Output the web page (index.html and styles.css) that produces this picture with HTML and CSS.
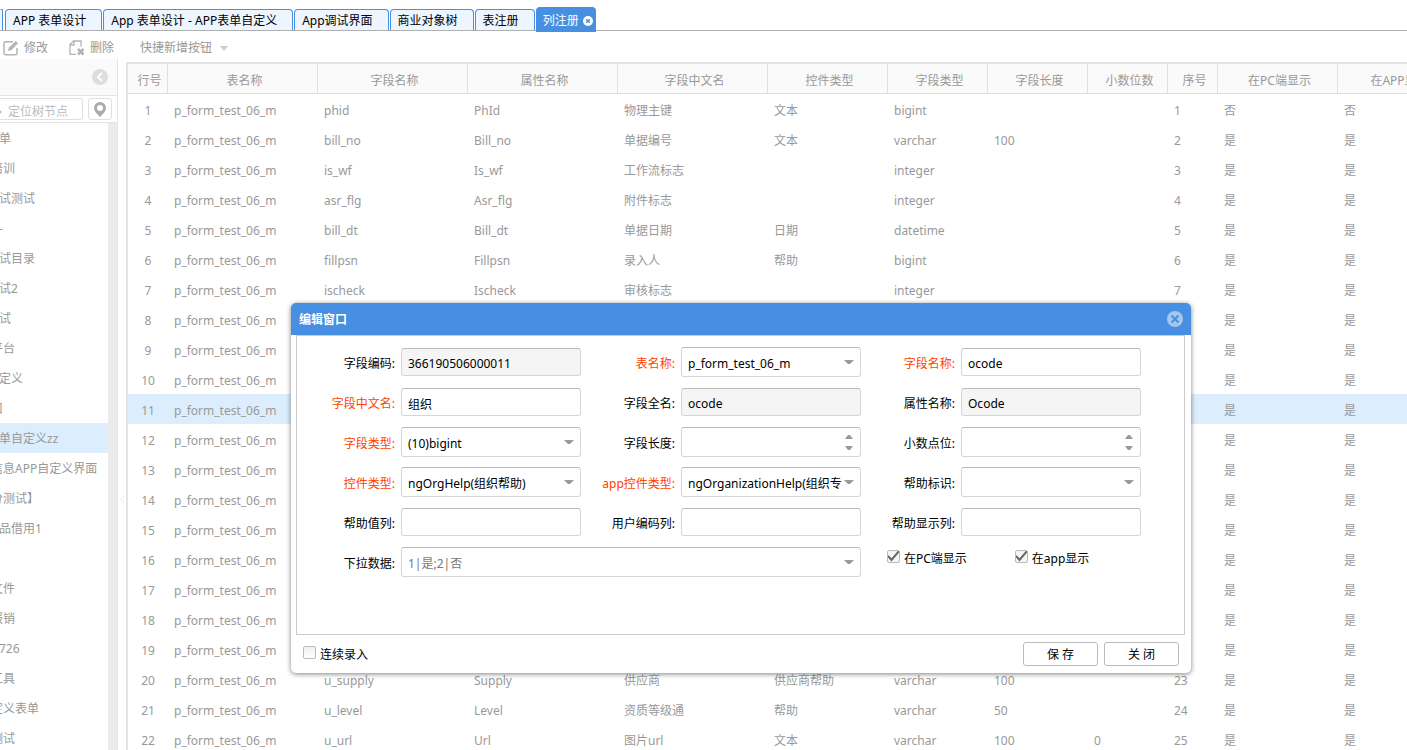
FILE: index.html
```
<!DOCTYPE html>
<html lang="zh-CN">
<head>
  <meta charset="UTF-8" />
  <meta name="viewport" content="width=device-width, initial-scale=1.0" />
  <title>列注册</title>
  <link rel="stylesheet" href="styles.css">
</head>
<body>
  <nav class="tabs">
    <a class="tab tab-cut" href="#" aria-label="上一页"></a>
    <a class="tab" href="#">APP 表单设计</a>
    <a class="tab" href="#">App 表单设计 - APP表单自定义</a>
    <a class="tab" href="#">App调试界面</a>
    <a class="tab" href="#">商业对象树</a>
    <a class="tab" href="#">表注册</a>
    <a class="tab active" href="#">列注册
      <svg width="10" height="10" viewBox="0 0 10 10"><circle cx="5" cy="5" r="5" fill="#fff"/><path d="M3.2 3.2l3.6 3.6M6.8 3.2L3.2 6.8" stroke="#478fe0" stroke-width="1.5"/></svg>
    </a>
  </nav>

  <div class="toolbar">
    <button class="tool">
      <svg width="16" height="16" viewBox="0 0 16 16" fill="none" stroke="#b4b4b4"><path d="M10 1.7H2.5a1.5 1.5 0 0 0-1.5 1.5v10a1.5 1.5 0 0 0 1.5 1.5h10a1.5 1.5 0 0 0 1.5-1.5V8" stroke-width="1.5"/><path d="M5 11l.8-3.2L12.7 1l2.4 2.3-6.9 6.9z" fill="#b4b4b4" stroke="none"/></svg>
      修改
    </button>
    <button class="tool">
      <svg width="16" height="16" viewBox="0 0 16 16" fill="none" stroke="#b4b4b4"><path d="M7 14.300H1V4.500L4.500 1H12v5.500M1 5h4V1" stroke-width="1.300"/><path d="M9 9l5.500 5.500M14.500 9L9 14.500" stroke-width="2.600"/></svg>
      删除
    </button>
    <button class="tool tool-menu">快捷新增按钮 <i class="caret"></i></button>
  </div>

  <div class="main">
    <aside class="sidebar">
      <div class="sidebar-head">
        <button class="collapse" aria-label="收起">
          <svg width="16" height="16" viewBox="0 0 16 16"><circle cx="8" cy="8" r="8" fill="#ddd"/><path d="M10 4L6 8l4 4" fill="none" stroke="#fff" stroke-width="2"/></svg>
        </button>
      </div>
      <div class="search">
        <input type="text" placeholder="定位树节点" aria-label="定位树节点">
        <button class="locate" aria-label="定位">
          <svg width="12" height="15" viewBox="0 0 12 15"><path fill-rule="evenodd" fill="#aaa" d="M6 0a6 6 0 0 1 6 6c0 3-2.500 5.500-6 9-3.500-3.500-6-6-6-9a6 6 0 0 1 6-6zm0 3a3 3 0 1 0 0 6 3 3 0 0 0 0-6z"/></svg>
        </button>
      </div>
      <ul class="tree">
        <li class="leaf">单</li>
        <li>培训</li>
        <li class="leaf">试测试</li>
        <li class="leaf">-</li>
        <li class="leaf">试目录</li>
        <li class="leaf">试2</li>
        <li class="leaf">试</li>
        <li>平台</li>
        <li class="leaf">定义</li>
        <li>口</li>
        <li class="leaf selected">单自定义zz</li>
        <li>信息APP自定义界面</li>
        <li>分测试】</li>
        <li class="leaf">品借用1</li>
        <li></li>
        <li>文件</li>
        <li>报销</li>
        <li class="leaf">726</li>
        <li>工具</li>
        <li>定义表单</li>
        <li>测试</li>
      </ul>
    </aside>
    <div class="splitter"><svg width="5" height="9" viewBox="0 0 5 9"><path d="M4 1L1 4.500 4 8" fill="none" stroke="#e8e8e8"/></svg></div>

    <div class="grid">
      <table>
        <colgroup>
          <col class="w40"><col class="w150"><col class="w150"><col class="w150"><col class="w150"><col class="w120">
          <col class="w100"><col class="w100"><col class="w80"><col class="w50"><col class="w120"><col class="w120">
        </colgroup>
        <thead>
          <tr>
            <th>行号</th><th>表名称</th><th>字段名称</th><th>属性名称</th><th>字段中文名</th><th>控件类型</th>
            <th>字段类型</th><th>字段长度</th><th>小数位数</th><th>序号</th><th>在PC端显示</th><th>在APP显示</th>
          </tr>
        </thead>
        <tbody id="rows"></tbody>
      </table>
    </div>
  </div>

  <div class="dialog" role="dialog" aria-labelledby="dialog-title">
    <div class="dialog-head">
      <h2 id="dialog-title">编辑窗口</h2>
      <button class="dialog-close" aria-label="关闭窗口">
        <svg width="16" height="16" viewBox="0 0 16 16"><circle cx="8" cy="8" r="8" fill="#a4c7ef"/><path d="M4.500 4.500l7 7M11.500 4.500l-7 7" stroke="#478fe0" stroke-width="2"/></svg>
      </button>
    </div>
    <form class="dialog-body">
      <div class="field"><label for="code">字段编码:</label><input id="code" type="text" value="366190506000011" readonly></div>
      <div class="field required"><label for="tname">表名称:</label><select id="tname"><option>p_form_test_06_m</option></select></div>
      <div class="field required"><label for="fname">字段名称:</label><input id="fname" type="text" value="ocode"></div>

      <div class="field required"><label for="cname">字段中文名:</label><input id="cname" type="text" value="组织"></div>
      <div class="field"><label for="full">字段全名:</label><input id="full" type="text" value="ocode" readonly></div>
      <div class="field"><label for="prop">属性名称:</label><input id="prop" type="text" value="Ocode" readonly></div>

      <div class="field required"><label for="ftype">字段类型:</label><select id="ftype"><option>(10)bigint</option></select></div>
      <div class="field"><label for="len">字段长度:</label><input id="len" class="spin" type="number"></div>
      <div class="field"><label for="dec">小数点位:</label><input id="dec" class="spin" type="number"></div>

      <div class="field required"><label for="ctrl">控件类型:</label><select id="ctrl"><option>ngOrgHelp(组织帮助)</option></select></div>
      <div class="field required"><label for="appctrl">app控件类型:</label><select id="appctrl"><option>ngOrganizationHelp(组织专</option></select></div>
      <div class="field"><label for="helpid">帮助标识:</label><select id="helpid"><option></option></select></div>

      <div class="field"><label for="helpval">帮助值列:</label><input id="helpval" type="text"></div>
      <div class="field"><label for="usercode">用户编码列:</label><input id="usercode" type="text"></div>
      <div class="field"><label for="helpshow">帮助显示列:</label><input id="helpshow" type="text"></div>

      <div class="field wide"><label for="data">下拉数据:</label><select id="data" class="muted"><option>1|是;2|否</option></select></div>
      <div class="checks">
        <label class="check"><input type="checkbox" checked>在PC端显示</label>
        <label class="check"><input type="checkbox" checked>在app显示</label>
      </div>
    </form>
    <div class="dialog-foot">
      <label class="check"><input type="checkbox">连续录入</label>
      <button class="btn">保 存</button>
      <button class="btn">关 闭</button>
    </div>
  </div>

  <script>
    // field, property, label, control, type, length, decimals, order, pc, app
    const rows = [
      ['phid', 'PhId', '物理主键', '文本', 'bigint', '', '', '1', '否', '否'],
      ['bill_no', 'Bill_no', '单据编号', '文本', 'varchar', '100', '', '2', '是', '是'],
      ['is_wf', 'Is_wf', '工作流标志', '', 'integer', '', '', '3', '是', '是'],
      ['asr_flg', 'Asr_flg', '附件标志', '', 'integer', '', '', '4', '是', '是'],
      ['bill_dt', 'Bill_dt', '单据日期', '日期', 'datetime', '', '', '5', '是', '是'],
      ['fillpsn', 'Fillpsn', '录入人', '帮助', 'bigint', '', '', '6', '是', '是'],
      ['ischeck', 'Ischeck', '审核标志', '', 'integer', '', '', '7', '是', '是']
    ];
    while (rows.length < 19) {
      rows.push(['', '', '', '', '', '', '', '', '是', '是']);
    }
    rows.push(
      ['u_supply', 'Supply', '供应商', '供应商帮助', 'varchar', '100', '', '23', '是', '是'],
      ['u_level', 'Level', '资质等级通', '帮助', 'varchar', '50', '', '24', '是', '是'],
      ['u_url', 'Url', '图片url', '文本', 'varchar', '100', '0', '25', '是', '是']
    );

    const body = document.getElementById('rows');
    rows.forEach((row, i) => {
      const tr = body.insertRow();
      if (i === 10) tr.className = 'selected';
      [i + 1, 'p_form_test_06_m', ...row].forEach(text => {
        tr.insertCell().textContent = text;
      });
    });
  </script>
</body>
</html>
```
FILE: styles.css
```
* {
  box-sizing: border-box;
}
body {
  margin: 0;
  height: 100vh;
  display: flex;
  flex-direction: column;
  overflow: hidden;
  background: #fff;
  color: #999;
  font: 12px/16px "Noto Sans", "Noto Sans CJK SC", sans-serif;
}
button, input, select {
  font: inherit;
  color: inherit;
}
button {
  padding: 0;
  border: none;
  background: none;
  cursor: pointer;
}
svg {
  display: block;
  flex: none;
}

/* tabs */
.tabs {
  display: flex;
  align-items: flex-end;
  gap: 1px;
  height: 31px;
  flex: none;
  border-bottom: 1px solid #b0b0b0;
}
.tab {
  height: 21px;
  padding: 3px 15px 0 7px;
  border: 1px solid #4a90e2;
  border-bottom: none;
  border-radius: 4px 4px 0 0;
  background: #edf5fe;
  color: #000;
  white-space: nowrap;
  text-decoration: none;
}
.tab-cut {
  width: 3px;
  padding: 0;
  margin-right: 1px;
  border-left: none;
}
.tab.active {
  display: flex;
  align-items: center;
  gap: 4px;
  height: 25px;
  margin-bottom: -2px;
  padding: 1px 2px 0 6px;
  background: #478fe0;
  color: #fff;
}

/* toolbar */
.toolbar {
  display: flex;
  align-items: center;
  gap: 21px;
  height: 28px;
  padding: 6px 3px 0;
  flex: none;
}
.tool {
  display: flex;
  align-items: center;
  gap: 5px;
}
.tool-menu {
  gap: 8px;
  margin-left: 5px;
}
.caret {
  border: 4px solid transparent;
  border-top: 5px solid #ccc;
  border-bottom: none;
}

.main {
  display: flex;
  flex: 1;
  min-height: 0;
}

/* left tree */
.sidebar {
  display: flex;
  flex-direction: column;
  width: 118px;
  flex: none;
  border-right: 1px solid #e4e4e4;
}
.sidebar-head {
  display: flex;
  align-items: center;
  justify-content: flex-end;
  height: 37px;
  padding-right: 9px;
  flex: none;
  background: #fafafa;
  border-bottom: 1px solid #e4e4e4;
}
.search {
  display: flex;
  align-items: center;
  gap: 5px;
  height: 27px;
  padding-right: 5px;
  flex: none;
  border-bottom: 1px solid #e4e4e4;
}
.search input {
  flex: 1;
  min-width: 0;
  height: 22px;
  padding: 4px 0 0 8px;
  border: 1px solid #e0e0e0;
  border-left: none;
  border-radius: 0 3px 3px 0;
  background: #fff radial-gradient(circle at 0 13px, #bbb 1px, transparent 2px);
}
.search input::placeholder {
  color: #bbb;
}
.locate {
  display: flex;
  align-items: center;
  justify-content: center;
  width: 24px;
  height: 22px;
  border: 1px solid #e0e0e0;
  border-radius: 3px;
}
.tree {
  flex: 1;
  min-height: 0;
  margin: 0;
  padding: 0;
  overflow: hidden;
  list-style: none;
  border-right: 9px solid #ebebeb;
}
.tree li {
  height: 30px;
  padding-top: 1px;
  line-height: 30px;
  text-indent: -9px;
  white-space: nowrap;
}
.tree .leaf {
  text-indent: -1px;
}
.tree .selected {
  background: #dcedfd;
}
.splitter {
  display: flex;
  align-items: center;
  justify-content: center;
  width: 8px;
  padding-top: 190px;
  flex: none;
}

/* data grid */
.grid {
  flex: 1;
  min-width: 0;
  margin-top: 3px;
  overflow: hidden;
  border-top: 2px solid #e4e4e4;
  border-left: 2px solid #e4e4e4;
}
.grid table {
  width: 1330px;
  table-layout: fixed;
  border-collapse: separate;
  border-spacing: 0;
}
.w40 { width: 40px; }
.w50 { width: 50px; }
.w80 { width: 80px; }
.w100 { width: 100px; }
.w120 { width: 120px; }
.w150 { width: 150px; }
.grid th {
  height: 30px;
  padding: 4px 0 0 4px;
  background: #fafafa;
  border-right: 1px solid #e0e0e0;
  border-bottom: 1px solid #e0e0e0;
  font-weight: normal;
}
.grid td {
  height: 30px;
  padding: 4px 0 0 6px;
  white-space: nowrap;
}
.grid td:first-child {
  padding-left: 0;
  text-align: center;
}
.grid .selected td {
  background: #dcedfd;
}

/* edit dialog */
.dialog {
  position: absolute;
  top: 303px;
  left: 291px;
  width: 900px;
  border-radius: 5px;
  background: #fff;
  color: #000;
  box-shadow: 0 1px 5px rgba(0, 0, 0, 0.5);
}
.dialog-head {
  display: flex;
  align-items: center;
  justify-content: space-between;
  height: 32px;
  padding: 0 8px;
  border-radius: 5px 5px 0 0;
  background: #478fe0;
}
.dialog-head h2 {
  margin: 0;
  padding-top: 2px;
  color: #fff;
  font-size: 12px;
  font-weight: bold;
}
.dialog-body {
  display: grid;
  grid-template-columns: repeat(3, 280px);
  grid-auto-rows: 40px;
  align-content: start;
  height: 300px;
  margin: 0 6px 0 5px;
  padding: 6px 4px;
  border: 1px solid #ccc;
}
.field {
  display: flex;
  align-items: center;
  gap: 6px;
}
.field label {
  width: 94px;
  padding-top: 3px;
  flex: none;
  text-align: right;
  white-space: nowrap;
}
.required label {
  color: #ff4200;
}
.wide {
  grid-column: span 2;
}
.field input, .field select {
  flex: 1;
  min-width: 0;
  height: 28px;
  padding: 3px 6px 0;
  border: 1px solid #d5d5d5;
  border-top-color: #bbb;
  border-radius: 3px;
  background-color: #fff;
  outline: none;
}
.field input[readonly] {
  background-color: #f5f5f5;
}
.field select, .field .spin {
  height: 30px;
  padding-right: 17px;
  appearance: none;
  background-repeat: no-repeat;
  background-position: right 6px center;
}
.field select {
  background-image: url("data:image/svg+xml,%3Csvg xmlns='http://www.w3.org/2000/svg' width='10' height='5'%3E%3Cpath d='M0 0h10L6 4H4z' fill='%23999'/%3E%3C/svg%3E");
}
.field .spin {
  background-image: url("data:image/svg+xml,%3Csvg xmlns='http://www.w3.org/2000/svg' width='10' height='16'%3E%3Cpath d='M1 5h8L6 1H4zM1 12h8L6 16H4z' fill='%23999'/%3E%3C/svg%3E");
}
.spin::-webkit-inner-spin-button {
  appearance: none;
}
.field .muted {
  color: #777;
}
.checks {
  display: flex;
  gap: 48px;
  padding: 6px 0 0 26px;
}
.check {
  display: flex;
  align-items: flex-start;
  gap: 4px;
  height: 20px;
  line-height: 22px;
  white-space: nowrap;
}
.check input {
  width: 13px;
  height: 13px;
  margin: 2px 0 0;
  appearance: none;
  border: 1px solid #bbb;
  border-radius: 2px;
  background: linear-gradient(#f0f0f0, #fff);
}
.check input:checked {
  background: url("data:image/svg+xml,%3Csvg xmlns='http://www.w3.org/2000/svg' width='13' height='13'%3E%3Cpath d='M1 6l3.500 4L12 1' fill='none' stroke='%23666' stroke-width='2'/%3E%3C/svg%3E") no-repeat center, #f5f5f5;
}
.dialog-foot {
  display: flex;
  align-items: center;
  gap: 6px;
  height: 38px;
  padding: 0 12px;
}
.dialog-foot .check {
  margin-right: auto;
}
.btn {
  width: 75px;
  height: 24px;
  padding-top: 2px;
  border: 1px solid #bbb;
  border-radius: 3px;
  background: #fff;
}
```
